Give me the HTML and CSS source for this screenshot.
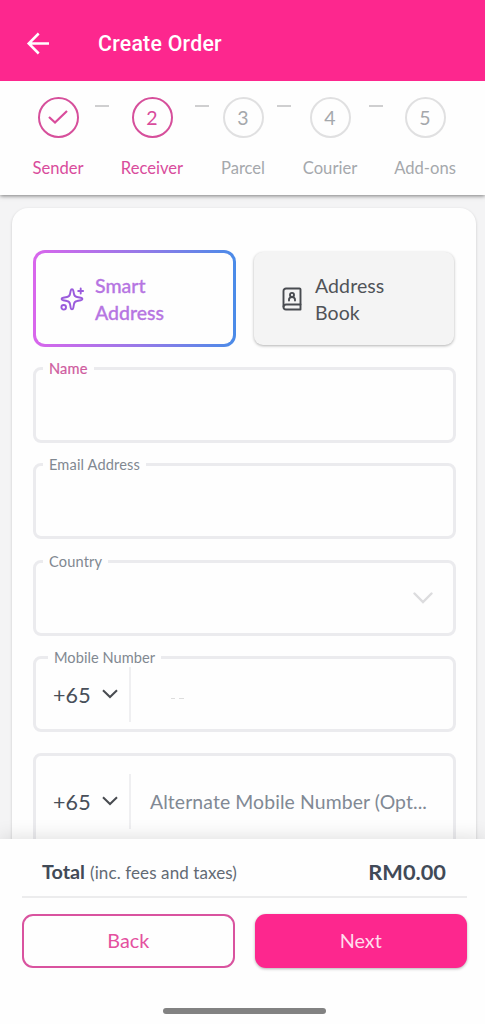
FILE: index.html
```html
<!DOCTYPE html>
<html lang="en">
<head>
<meta charset="utf-8">
<title>Create Order</title>
<link rel="stylesheet" href="styles.css">
</head>
<body>
<div class="app">
  <header class="topbar">
    <svg class="back-arrow" width="24" height="24" viewBox="0 0 24 24" fill="none" stroke="#fff" stroke-width="2.500"><path d="M23 11.500H3M12.700 1.500 2.700 11.500l10 10"/></svg>
    <h1 class="title">Create Order</h1>
  </header>

  <nav class="stepper">
    <div class="step active">
      <span class="circle"><svg width="20" height="16" viewBox="0 0 20 16" fill="none" stroke="currentColor" stroke-width="2.200"><path d="M1 8l6 5.500L19 2"/></svg></span>
      <span class="step-label w-sender">Sender</span>
    </div>
    <i class="dash"></i>
    <div class="step active"><span class="circle">2</span><span class="step-label w-receiver">Receiver</span></div>
    <i class="dash"></i>
    <div class="step"><span class="circle">3</span><span class="step-label w-parcel">Parcel</span></div>
    <i class="dash"></i>
    <div class="step"><span class="circle">4</span><span class="step-label w-courier">Courier</span></div>
    <i class="dash"></i>
    <div class="step"><span class="circle">5</span><span class="step-label w-addons">Add-ons</span></div>
  </nav>

  <main class="content">
    <section class="card">
      <div class="choices">
        <button class="smart">
          <svg width="24" height="24" viewBox="0 0 24 24" fill="none" stroke="#9a5bdc" stroke-width="1.900" stroke-linejoin="round" stroke-linecap="round"><path d="M12 2.200c.8 0 1.100.5 1.300 1.400l.7 3.400c.3 1.700 1.300 2.700 3 3l3.800.7c2.200.5 2.200 2 0 2.500l-3.800.8c-1.700.3-2.700 1.300-3 3l-.7 3.900c-.4 2-2.200 2-2.600 0L10 17c-.3-1.700-1.300-2.700-3-3l-3.800-.8c-2.200-.5-2.200-2 0-2.500L7 10c1.700-.3 2.700-1.300 3-3l.7-3.400c.2-.9.500-1.400 1.300-1.400z"/><path d="M20.700 1.500v5M18.200 4h5"/><circle cx="3.700" cy="20.300" r="2.300"/></svg>
          <span class="smart-text">Smart<br>Address</span>
        </button>
        <button class="book">
          <svg width="20" height="24" viewBox="0 0 20 24" fill="none" stroke="#484b50" stroke-width="1.900" stroke-linejoin="round" stroke-linecap="round"><path d="M18.500 17.500V2.500a1 1 0 0 0-1-1H4a2.500 2.500 0 0 0-2.500 2.500v15.500"/><path d="M18.500 17.500H4a2.500 2.500 0 0 0 0 5h14.500z"/><circle cx="10" cy="7.900" r="2"/><path d="M7 13.500v-.7c0-1.700 1.300-2.700 3-2.700s3 1 3 2.700v.7"/></svg>
          <span>Address<br>Book</span>
        </button>
      </div>

      <div class="field"><label class="field-label pink">Name</label></div>
      <div class="field"><label class="field-label">Email Address</label></div>
      <div class="field select">
        <label class="field-label">Country</label>
        <svg width="20" height="12" viewBox="0 0 20 12" fill="none" stroke="#dcdcde" stroke-width="2.400" stroke-linecap="round"><path d="M1.500 1.500 10 10l8.500-8.500"/></svg>
      </div>
      <div class="field phone">
        <label class="field-label inset">Mobile Number</label>
        <span class="code">+65</span>
        <svg class="chev" width="16" height="10" viewBox="0 0 16 10" fill="none" stroke="#484b50" stroke-width="2"><path d="M1 1.200 8 8l7-6.800"/></svg>
        <i class="divider"></i>
        <svg class="marks" width="16" height="3" viewBox="0 0 16 3" stroke="#ddd"><path d="M1 1.500h4M9 1.500h5"/></svg>
      </div>
      <div class="field phone alt">
        <span class="code">+65</span>
        <svg class="chev" width="16" height="10" viewBox="0 0 16 10" fill="none" stroke="#484b50" stroke-width="2"><path d="M1 1.200 8 8l7-6.800"/></svg>
        <i class="divider"></i>
        <span class="placeholder">Alternate Mobile Number (Opt...</span>
      </div>
    </section>
  </main>

  <footer class="footer">
    <div class="total">
      <span><b>Total</b> <span class="note">(inc. fees and taxes)</span></span>
      <b class="amount">RM0.00</b>
    </div>
    <div class="actions">
      <button class="btn outline">Back</button>
      <button class="btn solid">Next</button>
    </div>
    <i class="home-bar"></i>
  </footer>
</div>
</body>
</html>
```
FILE: styles.css
```css
* { box-sizing: border-box; }
body { margin: 0; font-family: Lato, "Liberation Sans", sans-serif; color: #414a57; }
button { font: inherit; border: 0; margin: 0; text-align: left; color: inherit; }
.app { display: flex; flex-direction: column; width: 485px; height: 1024px; overflow: hidden; background: #fefefe; }

.topbar { flex: none; height: 81px; background: #fd278e; display: flex; align-items: center; padding: 6px 0 0 26px; }
.back-arrow { flex: none; }
.title { margin: 0 0 0 48px; color: #fff; font: 500 21.300px/28px Roboto, sans-serif; letter-spacing: .25px; }

.stepper { flex: none; height: 114px; display: flex; align-items: flex-start; gap: 11px; padding: 16px 0 0 32px; background: #fefefe; box-shadow: 0 1px 4px rgba(0,0,0,.5); clip-path: inset(0 0 -10px 0); position: relative; z-index: 1; }
.step { display: flex; flex-direction: column; align-items: center; color: #a5a8ac; }
.step.active { color: #d94c9c; }
.circle { width: 41px; height: 41px; border: 2px solid #e0e0e1; border-radius: 50%; display: flex; align-items: center; justify-content: center; font-size: 19.500px; padding-bottom: 1px; }
.active .circle { border-color: #d64f9b; }
.step-label { margin-top: 19px; font-size: 16.600px; line-height: 22px; text-align: center; white-space: nowrap; }
.w-sender { width: 52px; }
.w-receiver { width: 64px; }
.w-parcel { width: 46px; }
.w-courier { width: 56px; }
.w-addons { width: 62px; }
.dash { width: 14px; height: 2px; margin-top: 8px; background: #cfcfd0; }

.content { flex: 1; min-height: 0; overflow: hidden; background: #f4f4f5; padding: 13px 9px 0 12px; }
.card { height: 760px; background: #fefefe; border-radius: 16px; box-shadow: 0 1px 3px rgba(0,0,0,.18); padding: 42px 20px 0; }
.choices { display: flex; justify-content: space-between; align-items: center; height: 97px; margin: 0 2px 20px 1px; }
.smart, .book { display: flex; align-items: center; font-size: 19.500px; line-height: 27px; letter-spacing: .1px; }
.smart { width: 203px; height: 97px; padding: 0 0 0 24px; gap: 11px; border: 3px solid transparent; border-radius: 12px; background: linear-gradient(#fefefe, #fefefe) padding-box, linear-gradient(90deg, #d966ec, #9a78e8 50%, #4a8be8) border-box; }
.smart-text { color: #b675e2; font-weight: 500; letter-spacing: 0; -webkit-text-stroke: .3px #b675e2; }
.book { width: 200px; height: 93px; padding: 0 0 0 28px; gap: 13px; border-radius: 9px; background: #f4f4f4; color: #505358; box-shadow: 0 1px 3px rgba(0,0,0,.3); }
.smart svg, .book svg { flex: none; }

.field { position: relative; height: 76px; margin: 0 0 20.400px 1px; border: 3px solid #ebebee; border-radius: 8px; display: flex; align-items: center; }
.field-label { position: absolute; left: 7px; top: -10px; padding: 0 6px; background: #fefefe; color: #818891; font-size: 14.600px; line-height: 18px; letter-spacing: .15px; white-space: nowrap; }
.field-label.inset { left: 12px; letter-spacing: .05px; }
.field-label.pink { color: #cf5c9e; -webkit-text-stroke: .2px #cf5c9e; }
.select { justify-content: flex-end; padding-right: 20px; }
.phone { padding-left: 17px; }
.code { width: 49px; padding-top: 2px; font-size: 21.500px; letter-spacing: .1px; color: #484f59; }
.divider { width: 2px; height: 55px; margin-left: 11px; background: #efeff1; flex: none; }
.chev, .marks { flex: none; }
.marks { margin: 9px 0 0 39px; }
.field.alt { height: 97px; }
.placeholder { margin-left: 19px; font-size: 19.400px; letter-spacing: .1px; color: #818994; white-space: nowrap; }

.footer { flex: none; height: 185px; padding: 0 18px 0 22px; background: #fefefe; position: relative; box-shadow: 0 -2px 18px rgba(0,0,0,.12); display: flex; flex-direction: column; }
.total { height: 59px; border-bottom: 2px solid #ececed; padding: 7px 21px 0 20px; display: flex; justify-content: space-between; align-items: center; font-size: 19.800px; }
.note { font-size: 17px; letter-spacing: .1px; color: #626a74; }
.amount { font-size: 21.800px; }
.actions { display: flex; justify-content: space-between; margin-top: 16px; }
.btn { width: 212.500px; height: 54px; border-radius: 11px; font-size: 19.800px; text-align: center; padding: 0 0 2px; }
.outline { background: #fefefe; border: 2px solid #d9539f; color: #e4509f; }
.solid { background: #fd278e; color: #ffddec; box-shadow: 0 1px 3px rgba(0,0,0,.3); }
.home-bar { align-self: center; margin-top: 40px; width: 163px; height: 6px; border-radius: 3px; background: #828282; }
```
